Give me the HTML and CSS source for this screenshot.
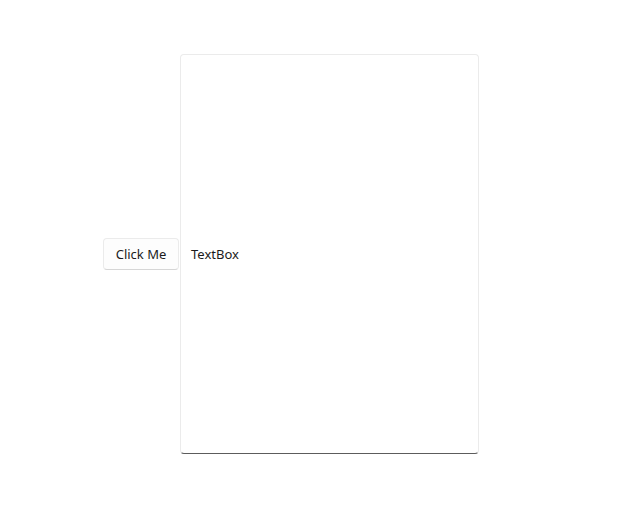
FILE: index.html
```html
<!DOCTYPE html>
<html>
<head>
<meta charset="utf-8">
<link rel="stylesheet" href="styles.css">
</head>
<body>
<div class="stage">
  <button class="btn">Click Me</button>
  <div class="textbox"><span class="tb-text">TextBox</span></div>
</div>
</body>
</html>
```
FILE: styles.css
```css
html, body {
  margin: 0;
  padding: 0;
  background: #ffffff;
}
body {
  width: 619px;
  height: 506px;
  font-family: "Noto Sans", "Open Sans", sans-serif;
  font-size: 13px;
  color: #1a1a1a;
}
.stage {
  display: flex;
  align-items: center;
  padding-left: 103px;
  padding-top: 54px;
}
.btn {
  box-sizing: border-box;
  width: 76px;
  height: 32px;
  margin: 0 1px 0 0;
  padding: 0;
  font-family: inherit;
  font-size: 13px;
  color: #1b1b1b;
  background: #fdfdfd;
  border: 1px solid #ebebeb;
  border-bottom-color: #d6d6d6;
  border-radius: 4px;
}
.textbox {
  box-sizing: border-box;
  width: 299px;
  height: 400px;
  display: flex;
  align-items: center;
  padding-left: 10px;
  padding-bottom: 1px;
  background: #ffffff;
  border: 1px solid #ebebeb;
  border-bottom: 1px solid #5c5c5c;
  border-radius: 4px;
}
.tb-text {
  color: #1b1b1b;
}
```
